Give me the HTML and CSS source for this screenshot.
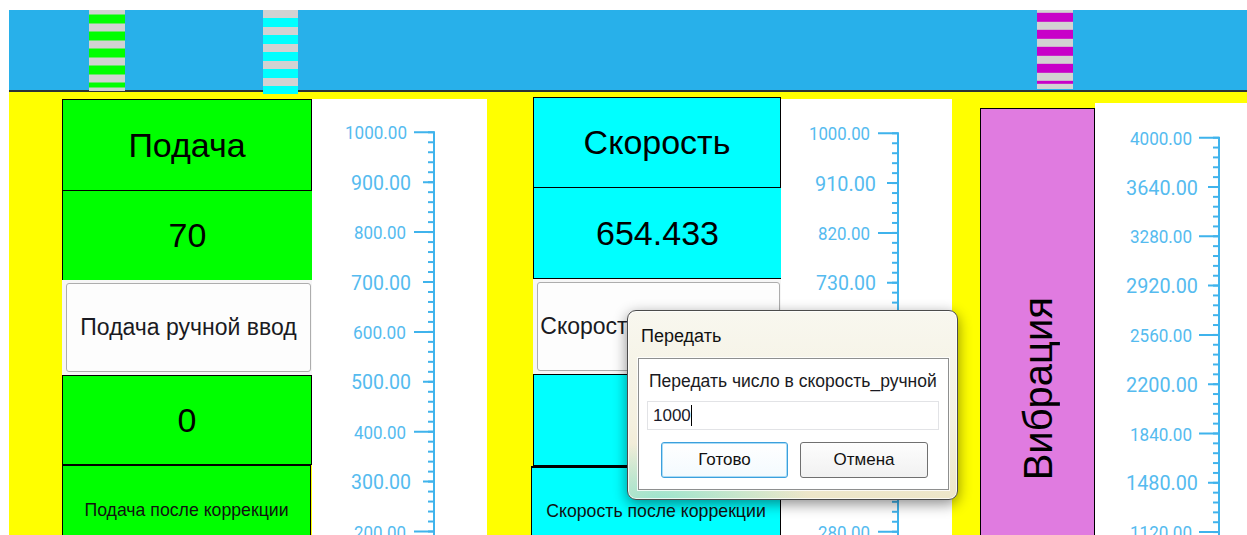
FILE: index.html
```html
<!DOCTYPE html>
<html lang="ru">
<head>
<meta charset="utf-8">
<title>Пульт</title>
<link rel="stylesheet" href="styles.css">
</head>
<body>
<div class="screen">
  <div class="topbar">
    <span class="marker marker-feed"></span>
    <span class="marker marker-speed"></span>
    <span class="marker marker-vib"></span>
  </div>

  <div class="floor">
    <section class="unit unit-feed">
      <div class="cell head">Подача</div>
      <div class="cell value open">70</div>
      <div class="slot"><button class="manual">Подача ручной ввод</button></div>
      <div class="cell value boxed">0</div>
      <div class="cell note">Подача после коррекции</div>
    </section>

    <div class="scale scale-feed">
      <svg width="175" height="436" viewBox="0 0 175 436">
        <defs>
          <pattern id="feed-minor" patternUnits="userSpaceOnUse" x="0" y="32.3" width="175" height="9.98">
            <rect class="tick-fill" x="116" y="0" width="6" height="2"/>
          </pattern>
        </defs>
        <rect x="116" y="32" width="6" height="404" fill="url(#feed-minor)"/>
        <path class="axis" d="M122 32.3V436M102 33.3H123M111 83.2H123M102 133.1H123M111 183H123M102 232.9H123M111 282.8H123M102 332.7H123M111 382.6H123M102 432.5H123"/>
        <text class="lbl sm" x="95" y="40.3" textLength="62" lengthAdjust="spacingAndGlyphs">1000.00</text>
        <text class="lbl lg" x="99" y="90.7" textLength="60" lengthAdjust="spacingAndGlyphs">900.00</text>
        <text class="lbl sm" x="94" y="140.1" textLength="52" lengthAdjust="spacingAndGlyphs">800.00</text>
        <text class="lbl lg" x="99" y="190.5" textLength="60" lengthAdjust="spacingAndGlyphs">700.00</text>
        <text class="lbl sm" x="94" y="239.9" textLength="53" lengthAdjust="spacingAndGlyphs">600.00</text>
        <text class="lbl lg" x="99" y="290.3" textLength="60" lengthAdjust="spacingAndGlyphs">500.00</text>
        <text class="lbl sm" x="94" y="339.7" textLength="52" lengthAdjust="spacingAndGlyphs">400.00</text>
        <text class="lbl lg" x="99" y="390.1" textLength="60" lengthAdjust="spacingAndGlyphs">300.00</text>
        <text class="lbl sm" x="94" y="439.5" textLength="52" lengthAdjust="spacingAndGlyphs">200.00</text>
      </svg>
    </div>

    <section class="unit unit-speed">
      <div class="cell head">Скорость</div>
      <div class="cell value open under">654.433</div>
      <div class="slot"><button class="manual">Скорость ручной ввод</button></div>
      <div class="cell value boxed">0</div>
      <div class="cell note">Скорость после коррекции</div>
    </section>

    <div class="scale scale-speed">
      <svg width="171" height="436" viewBox="0 0 171 436">
        <defs>
          <pattern id="speed-minor" patternUnits="userSpaceOnUse" x="0" y="33.3" width="171" height="9.96">
            <rect class="tick-fill" x="111" y="0" width="6" height="2"/>
          </pattern>
        </defs>
        <rect x="111" y="33" width="6" height="403" fill="url(#speed-minor)"/>
        <path class="axis" d="M117 33.3V436M97 34.3H118M106 84.1H118M97 133.9H118M106 183.7H118M97 233.5H118M106 283.3H118M97 333.1H118M106 382.9H118M97 432.7H118"/>
        <text class="lbl sm" x="89" y="41.3" textLength="61" lengthAdjust="spacingAndGlyphs">1000.00</text>
        <text class="lbl lg" x="95" y="91.6" textLength="61" lengthAdjust="spacingAndGlyphs">910.00</text>
        <text class="lbl sm" x="89" y="140.9" textLength="52" lengthAdjust="spacingAndGlyphs">820.00</text>
        <text class="lbl lg" x="95" y="191.2" textLength="60" lengthAdjust="spacingAndGlyphs">730.00</text>
        <text class="lbl sm" x="89" y="240.5" textLength="52" lengthAdjust="spacingAndGlyphs">640.00</text>
        <text class="lbl lg" x="95" y="290.8" textLength="60" lengthAdjust="spacingAndGlyphs">550.00</text>
        <text class="lbl sm" x="89" y="340.1" textLength="52" lengthAdjust="spacingAndGlyphs">460.00</text>
        <text class="lbl lg" x="95" y="390.4" textLength="60" lengthAdjust="spacingAndGlyphs">370.00</text>
        <text class="lbl sm" x="89" y="439.7" textLength="52" lengthAdjust="spacingAndGlyphs">280.00</text>
      </svg>
    </div>

    <section class="unit unit-vib">
      <span class="vib-title">Вибрация</span>
    </section>

    <div class="scale scale-vib">
      <svg width="152" height="432" viewBox="0 0 152 432">
        <defs>
          <pattern id="vib-minor" patternUnits="userSpaceOnUse" x="0" y="33.7" width="152" height="9.86">
            <rect class="tick-fill" x="118" y="0" width="6" height="2"/>
          </pattern>
        </defs>
        <rect x="118" y="33" width="6" height="399" fill="url(#vib-minor)"/>
        <path class="axis" d="M124 33.7V432M104 34.7H125M113 84H125M104 133.3H125M113 182.6H125M104 231.9H125M113 281.2H125M104 330.5H125M113 379.8H125M104 429.1H125"/>
        <text class="lbl sm" x="97" y="41.7" textLength="62" lengthAdjust="spacingAndGlyphs">4000.00</text>
        <text class="lbl lg" x="103" y="91.5" textLength="72" lengthAdjust="spacingAndGlyphs">3640.00</text>
        <text class="lbl sm" x="97" y="140.3" textLength="62" lengthAdjust="spacingAndGlyphs">3280.00</text>
        <text class="lbl lg" x="103" y="190.1" textLength="72" lengthAdjust="spacingAndGlyphs">2920.00</text>
        <text class="lbl sm" x="97" y="238.9" textLength="62" lengthAdjust="spacingAndGlyphs">2560.00</text>
        <text class="lbl lg" x="103" y="288.7" textLength="72" lengthAdjust="spacingAndGlyphs">2200.00</text>
        <text class="lbl sm" x="97" y="337.5" textLength="62" lengthAdjust="spacingAndGlyphs">1840.00</text>
        <text class="lbl lg" x="103" y="387.3" textLength="72" lengthAdjust="spacingAndGlyphs">1480.00</text>
        <text class="lbl sm" x="97" y="436.1" textLength="62" lengthAdjust="spacingAndGlyphs">1120.00</text>
      </svg>
    </div>
  </div>

  <div class="dialog" role="dialog" aria-label="Передать">
    <div class="dialog-title">Передать</div>
    <div class="dialog-body">
      <div class="prompt">Передать число в скорость_ручной</div>
      <div class="entry"><span class="entry-text">1000</span></div>
      <div class="actions">
        <button class="btn btn-default">Готово</button>
        <button class="btn">Отмена</button>
      </div>
    </div>
  </div>
</div>
</body>
</html>
```

FILE: styles.css
```css
body {
  margin: 0;
  background: #ffffff;
  font-family: "Liberation Sans", Arial, sans-serif;
  color: #000;
}

.screen {
  position: relative;
  margin: 10px 0 0 9px;
  width: 1238px;
  height: 525px;
}

/* ---- top strip with the three colour markers ---- */
.topbar {
  height: 80px;
  background: #28b0ea;
  border-bottom: 2px solid #2b3236;
  display: flex;
  align-items: flex-start;
}

.marker {
  flex: none;
  display: block;
  width: 36px;
  background-repeat: repeat;
}

.marker-feed {
  margin-left: 80px;
  height: 81px;
  background-image: repeating-linear-gradient(to bottom, #d2d2d2 0 8.5px, #00ff00 8.5px 17px);
  background-position: 0 -3.5px;
}

.marker-speed {
  margin-left: 138px;
  width: 35px;
  height: 84px;
  background-image: repeating-linear-gradient(to bottom, #d2d2d2 0 8.4px, #00ffff 8.4px 16.9px);
}

.marker-vib {
  margin-left: 739px;
  height: 79px;
  background-image: repeating-linear-gradient(to bottom, #d2d2d2 0 8.5px, #c800c8 8.5px 17px);
  background-position: 0 -5.2px;
}

/* ---- working area ---- */
.floor {
  height: 443px;
  background: #ffff00;
  display: flex;
  align-items: flex-start;
  overflow: hidden;
}

.unit {
  flex: none;
  display: flex;
  flex-direction: column;
}

.cell {
  flex: none;
  box-sizing: border-box;
  display: flex;
  align-items: center;
  justify-content: center;
  white-space: nowrap;
}

.unit-feed {
  width: 250px;
  margin: 7px 0 0 53px;
}

.unit-feed .cell { background: #00ff00; }

.unit-speed {
  width: 248px;
  margin: 5px 0 0 46px;
}

.unit-speed .cell { background: #00ffff; }

.head {
  height: 92px;
  border: 1px solid #000;
  font-size: 34px;
}

.value {
  font-size: 34px;
}

.value.open {
  height: 89px;
  border-left: 1px solid #000;
}

.value.under {
  height: 91px;
  border-bottom: 1px solid #000;
}

.unit-speed .head { height: 91px; }

.value.boxed {
  height: 90px;
  border: 1px solid #000;
}

.unit-speed .value.boxed { height: 92px; }

.slot {
  flex: none;
  background: #f6f6f6;
  padding: 3px 1px 3px 4px;
}

.manual {
  display: block;
  width: 100%;
  height: 89px;
  margin: 0;
  padding: 0;
  border: 1px solid #adadad;
  border-radius: 3px;
  background: #fdfdfd;
  font-family: "Liberation Sans", Arial, sans-serif;
  font-size: 23px;
  color: #1a1a22;
  white-space: nowrap;
}

.note {
  height: 90px;
  border: 1px solid #000;
  font-size: 17.7px;
  color: #111;
}

.unit-feed .note { width: 249px; }

.unit-speed .note {
  width: 250px;
  margin-left: -2px;
  border-top-width: 2px;
}

/* ---- dial scales ---- */
.scale {
  flex: none;
  background: #ffffff;
}

.scale svg { display: block; }

.scale-feed { width: 175px; margin-top: 7px; }
.scale-speed { width: 171px; margin-top: 7px; }
.scale-vib { width: 152px; margin-top: 11px; }

.axis {
  fill: none;
  stroke: #3fb3ec;
  stroke-width: 2;
}

.tick-fill { fill: #3fb3ec; }

.lbl {
  font-family: Roboto, "Liberation Sans", sans-serif;
  fill: #55bbef;
  text-anchor: end;
}

.lbl.sm { font-size: 19px; }
.lbl.lg { font-size: 21px; }

/* ---- vibration column ---- */
.unit-vib {
  width: 115px;
  height: 440px;
  margin: 16px 0 0 28px;
  box-sizing: border-box;
  border: 1px solid #000;
  background: #e07be0;
  align-items: center;
  padding-top: 188px;
}

.vib-title {
  writing-mode: vertical-rl;
  transform: rotate(180deg);
  font-size: 40px;
  line-height: 1;
  white-space: nowrap;
}

/* ---- input dialog ---- */
.dialog {
  position: absolute;
  left: 618px;
  top: 300px;
  width: 331px;
  height: 190px;
  box-sizing: border-box;
  border: 1px solid #4b4b4b;
  border-radius: 9px;
  padding: 0 8px 9px 10px;
  display: flex;
  flex-direction: column;
  background:
    radial-gradient(ellipse 45% 30% at 10% 100%, rgba(60, 225, 210, 0.45), rgba(60, 225, 210, 0) 100%),
    linear-gradient(180deg, #f8f7ef 0%, #f4f0df 60%, #ede6c8 100%);
  box-shadow: 0 4px 14px rgba(0, 0, 0, 0.45), inset 0 0 0 1px rgba(255, 255, 255, 0.75);
}

.dialog-title {
  flex: none;
  height: 47px;
  box-sizing: border-box;
  padding: 15px 0 0 3px;
  font-size: 18px;
  line-height: 20px;
  color: #111;
}

.dialog-body {
  flex: 1;
  border: 1px solid #8e8f8f;
  background: #ffffff;
  box-shadow: 0 0 0 1px rgba(255, 255, 255, 0.8);
  padding: 12px 9px 0 8px;
  display: flex;
  flex-direction: column;
}

.prompt {
  padding-left: 2px;
  font-size: 17.5px;
  line-height: 20px;
  color: #1a1a22;
  white-space: nowrap;
}

.entry {
  margin-top: 10px;
  height: 29px;
  box-sizing: border-box;
  border: 1px solid #e2e3e6;
  padding-left: 5px;
  display: flex;
  align-items: center;
  font-size: 17px;
  color: #1a1a2a;
}

.entry-text {
  border-right: 1px solid #000;
  line-height: 21px;
}

.actions {
  margin-top: 12px;
  padding-left: 14px;
  display: flex;
  gap: 12px;
}

.btn {
  width: 128px;
  height: 36px;
  margin: 0;
  padding: 0;
  border: 1px solid #707070;
  border-radius: 3px;
  background: linear-gradient(180deg, #fdfdfd, #f1f1f1);
  font-family: "Liberation Sans", Arial, sans-serif;
  font-size: 17px;
  color: #111;
}

.btn-default {
  width: 127px;
  border-color: #3c9fdc;
  box-shadow: inset 0 0 0 1px #a9dcf6;
  background: linear-gradient(180deg, #ffffff, #f3fafe);
}
```
